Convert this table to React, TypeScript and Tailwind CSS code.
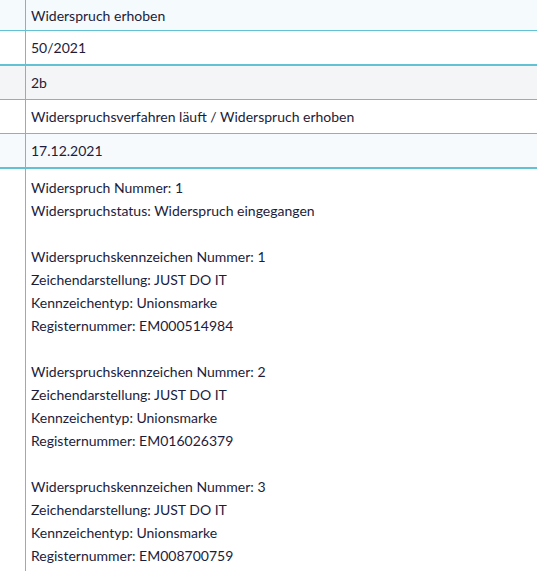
const rows = [
  { value: "Widerspruch erhoben", bg: "bg-[#f5fafc]", border: "border-b", h: "h-[31px]" },
  { value: "50/2021", bg: "bg-white", border: "border-b-2", h: "h-[35px]" },
  { value: "2b", bg: "bg-[#f4f5f7]", border: "border-b", h: "h-[34px]" },
  { value: "Widerspruchsverfahren läuft / Widerspruch erhoben", bg: "bg-white", border: "border-b", h: "h-[34px]" },
  { value: "17.12.2021", bg: "bg-[#f6fafc]", border: "border-b-2", h: "h-[35px]" },
];

const marks = [
  { nr: 1, reg: "EM000514984" },
  { nr: 2, reg: "EM016026379" },
  { nr: 3, reg: "EM008700759" },
];

export default function App() {
  return (
    <div className="min-h-[571px] bg-white font-['Lato',sans-serif] text-[14px] text-[#1c1c3c]">
      {rows.map((r) => (
        <div key={r.value} className={`flex ${r.h} ${r.border} border-[#62c1d3] ${r.bg}`}>
          <div className="w-[26px] shrink-0 border-r border-[#62c1d3]" />
          <div className="flex items-center pl-[5px]">{r.value}</div>
        </div>
      ))}
      <div className="flex min-h-[402px]">
        <div className="w-[26px] shrink-0 border-r border-[#62c1d3]" />
        <div className="pl-[5px] pt-[7px] leading-[23px]">
          <div>Widerspruch Nummer: 1</div>
          <div>Widerspruchstatus: Widerspruch eingegangen</div>
          {marks.map((m) => (
            <div key={m.nr}>
              <div className="h-[23px]" />
              <div>Widerspruchskennzeichen Nummer: {m.nr}</div>
              <div>Zeichendarstellung: JUST DO IT</div>
              <div>Kennzeichentyp: Unionsmarke</div>
              <div>Registernummer: {m.reg}</div>
            </div>
          ))}
        </div>
      </div>
    </div>
  );
}
